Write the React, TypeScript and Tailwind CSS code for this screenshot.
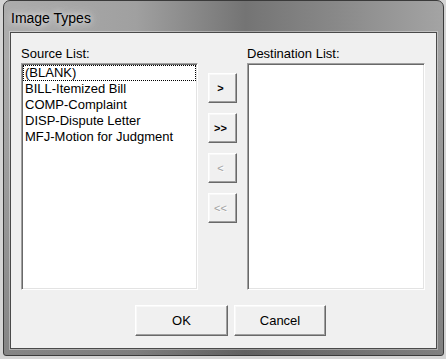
import React from 'react';

const sourceItems = [
  '(BLANK)',
  'BILL-Itemized Bill',
  'COMP-Complaint',
  'DISP-Dispute Letter',
  'MFJ-Motion for Judgment',
];

const Listbox: React.FC<{ items: string[]; className?: string }> = ({ items, className }) => (
  <div
    className={`bg-white border border-t-[#a0a0a0] border-l-[#a0a0a0] border-r-white border-b-white shadow-[inset_1px_1px_0_#696969,inset_-1px_-1px_0_#e3e3e3] p-[1px] ${className ?? ''}`}
  >
    {items.map((item, i) => (
      <div
        key={item}
        className={`h-[16px] pl-[1px] whitespace-nowrap leading-[14px] border ${
          i === 0 ? 'border-dotted border-black' : 'border-transparent'
        }`}
      >
        {item}
      </div>
    ))}
  </div>
);

const Button: React.FC<{ children: React.ReactNode; disabled?: boolean; className?: string }> = ({
  children,
  disabled,
  className,
}) => (
  <div
    className={`flex items-center justify-center bg-[#f0f0f0] border border-t-white border-l-white border-r-[#696969] border-b-[#696969] shadow-[inset_-1px_-1px_0_#a0a0a0,inset_1px_1px_0_#f8f8f8] ${
      disabled ? 'text-[#a0a0a0] [text-shadow:1px_1px_0_#ffffff]' : 'text-black'
    } ${className ?? ''}`}
  >
    {children}
  </div>
);

export default function App() {
  return (
    <div className="w-[446px] h-[359px] bg-[#d4d4d4] overflow-hidden font-['Liberation_Sans',Arial,sans-serif]">
      <div className="ml-[3px] w-[441px] h-[356px] rounded-t-[7px] rounded-b-[3px] border border-[#3a3a3a] flex flex-col px-[6px] pb-[6px] bg-[linear-gradient(to_bottom,rgba(0,0,0,0)_0%,rgba(0,0,0,0)_15%,rgba(60,60,60,0.35)_100%),linear-gradient(to_right,#acacac_0%,#a0a0a0_30%,#747474_55%,#888888_75%,#a4a4a4_100%)]">
        {/* title bar */}
        <div className="h-[31px] flex items-start pt-[9px] pl-[1px]">
          <span className="text-[14px] leading-[16px] text-black [text-shadow:0_0_6px_rgba(255,255,255,0.9),0_0_14px_rgba(255,255,255,0.7)]">
            Image Types
          </span>
        </div>

        {/* client area */}
        <div className="flex-1 bg-[#f0f0f0] border border-[#4a4a4a] shadow-[0_0_0_1px_rgba(255,255,255,0.35)] pt-[13px] pl-[10px] text-[13px] text-black">
          <div className="flex">
            <div className="flex flex-col w-[177px]">
              <div className="leading-[15px] h-[15px] mb-[2px]">Source List:</div>
              <Listbox items={sourceItems} className="h-[227px]" />
            </div>

            <div className="ml-[10px] mt-[27px] flex flex-col gap-[10px] w-[29px] text-[11px]">
              <Button className="h-[30px] pr-[4px] font-bold">&gt;</Button>
              <Button className="h-[30px] pr-[4px] font-bold">&gt;&gt;</Button>
              <Button className="h-[30px] pr-[4px]" disabled>&lt;</Button>
              <Button className="h-[30px] pr-[4px]" disabled>&lt;&lt;</Button>
            </div>

            <div className="ml-[10px] flex flex-col w-[178px]">
              <div className="leading-[15px] h-[15px] mb-[2px]">Destination List:</div>
              <Listbox items={[]} className="h-[227px]" />
            </div>
          </div>

          <div className="flex mt-[15px] pl-[114px] gap-[6px]">
            <Button className="w-[93px] h-[31px]">OK</Button>
            <Button className="w-[92px] h-[31px]">Cancel</Button>
          </div>
        </div>
      </div>
    </div>
  );
}
